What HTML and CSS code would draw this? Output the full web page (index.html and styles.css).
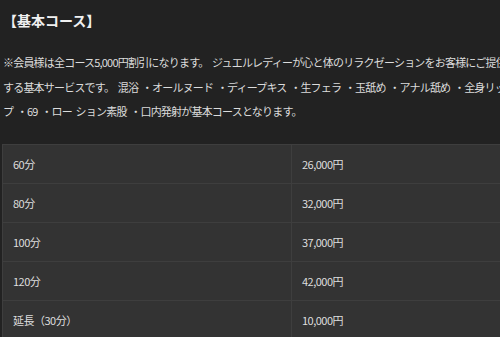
FILE: index.html
```html
<!DOCTYPE html>
<html lang="ja">
<head>
  <meta charset="UTF-8">
  <meta name="viewport" content="width=device-width, initial-scale=1.0">
  <title>基本コース</title>
  <link rel="stylesheet" href="styles.css">
</head>
<body>
  <div class="course-section">
    <h2 class="course-title">【基本コース】</h2>
    <p class="course-desc">
      ※会員様は全コース5,000円割引になります。 ジュエルレディーが心と体のリラクゼーションをお客様にご提供<br>
      する基本サービスです。 混浴 ・オールヌード ・ディープキス ・生フェラ ・玉舐め ・アナル舐め ・全身リッ<br>
      プ ・69 ・ロー ション素股 ・口内発射が基本コースとなります。
    </p>

    <table class="price-table">
      <tr>
        <td class="col-time">60分</td>
        <td class="col-price">26,000円</td>
      </tr>
      <tr>
        <td class="col-time">80分</td>
        <td class="col-price">32,000円</td>
      </tr>
      <tr>
        <td class="col-time">100分</td>
        <td class="col-price">37,000円</td>
      </tr>
      <tr>
        <td class="col-time">120分</td>
        <td class="col-price">42,000円</td>
      </tr>
      <tr>
        <td class="col-time">延長（30分）</td>
        <td class="col-price">10,000円</td>
      </tr>
    </table>
  </div>
</body>
</html>
```

FILE: styles.css
```css
* {
  margin: 0;
  padding: 0;
  box-sizing: border-box;
}

html,
body {
  overflow: hidden;
}

body {
  font-family: "Noto Sans CJK JP", "Noto Sans", sans-serif;
  background: #222222;
  color: #dddddd;
  font-size: 11px;
}

.course-section {
  width: 600px;
  padding: 10px 2px 0;
}

.course-title {
  font-size: 14px;
  font-weight: 700;
  line-height: 21px;
  color: #f0f0f0;
  margin-left: 1px;
}

.course-desc {
  margin: 19px 0 0 1px;
  line-height: 24.5px;
  letter-spacing: -0.8px;
  word-spacing: 2px;
  white-space: nowrap;
  color: #dcdcdc;
}

.price-table {
  margin-top: 20px;
  width: 580px;
  border-collapse: collapse;
  background: #333333;
  border: 1px solid #3e3e3e;
}

.price-table td {
  height: 39px;
  padding: 0 10px;
  border: 1px solid #3e3e3e;
  color: #dedede;
  letter-spacing: -0.5px;
  vertical-align: middle;
}

.col-time {
  width: 289px;
}
```
